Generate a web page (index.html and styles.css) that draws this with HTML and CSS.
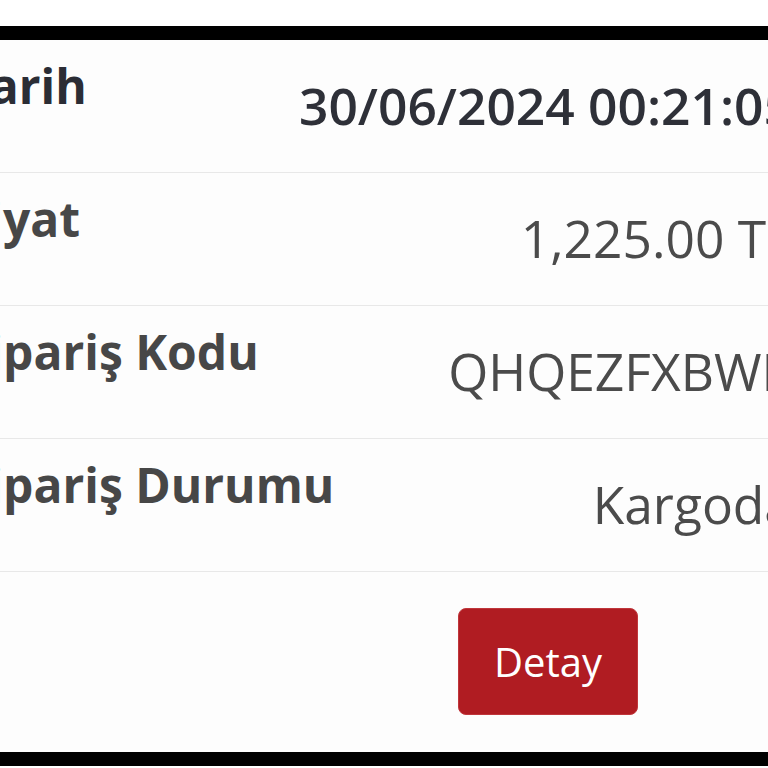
FILE: index.html
```html
<!DOCTYPE html>
<html>
<head>
    <title>Sipariş Bilgileri</title>
    <link rel="stylesheet" href="styles.css">
</head>
<body>
<div class="kart">
    <table class="siparis">
        <colgroup>
            <col class="sol">
            <col class="sag">
        </colgroup>
        <tr class="baslik">
            <th>Tarih</th>
            <td>30/06/2024 00:21:05</td>
        </tr>
        <tr>
            <th>Fiyat</th>
            <td>1,225.00 TL</td>
        </tr>
        <tr>
            <th>Sipariş Kodu</th>
            <td>QHQEZFXBWK</td>
        </tr>
        <tr>
            <th>Sipariş Durumu</th>
            <td>Kargoda</td>
        </tr>
        <tr class="islem">
            <th></th>
            <td><button type="button">Detay</button></td>
        </tr>
    </table>
</div>
</body>
</html>
```

FILE: styles.css
```css
body {
    font-family: "Open Sans", "Liberation Sans", sans-serif;
    background-color: #ffffff;
    margin: 0;
    overflow: hidden;
}

.kart {
    margin-top: 26px;
    border-top: 14px solid #000;
    border-bottom: 14px solid #000;
    background-color: #fdfdfd;
    overflow: hidden;
}

.siparis {
    border-collapse: collapse;
    table-layout: fixed;
    width: 857px;
    margin-left: -46px;
}

.siparis col.sol {
    width: 331px;
}

.siparis col.sag {
    width: 526px;
}

.siparis tr {
    height: 133px;
    border-bottom: 1px solid #e8e8e8;
}

.siparis tr.baslik {
    height: 132px;
}

.siparis tr.islem {
    height: 181px;
    border-bottom: none;
}

.siparis th {
    padding: 10px 0 0 8px;
    vertical-align: top;
    text-align: left;
    font-size: 48px;
    line-height: 1.5;
    font-weight: 700;
    color: #474747;
    white-space: nowrap;
}

.siparis td {
    padding: 0 18px 0 0;
    vertical-align: middle;
    text-align: right;
    font-size: 51.5px;
    line-height: 1.5;
    font-weight: 400;
    color: #4b4b4b;
    white-space: nowrap;
}

.baslik th {
    color: #2b2d35;
}

.baslik td {
    font-weight: 600;
    color: #2e3038;
}

.siparis .islem td {
    text-align: center;
    padding: 0;
}

button {
    width: 180px;
    height: 107px;
    font-family: "Open Sans", "Liberation Sans", sans-serif;
    font-size: 40px;
    color: #fff;
    background-color: #b01c22;
    border: 1px solid #c0363b;
    border-radius: 8px;
    cursor: pointer;
}
```
